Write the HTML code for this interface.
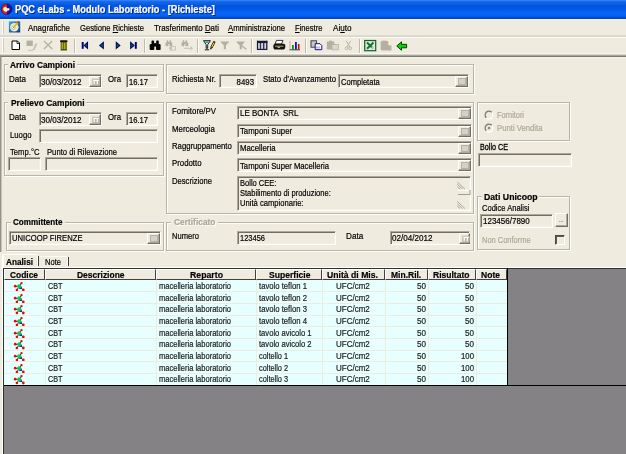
<!DOCTYPE html>
<html><head><meta charset="utf-8"><title>PQC eLabs - Modulo Laboratorio - [Richieste]</title>
<style>
html,body{margin:0;padding:0}
body{filter:blur(0.4px);width:626px;height:454px;overflow:hidden;position:relative;background:#efebde;font-family:"Liberation Sans",sans-serif;font-size:11px}
body div,body span.t,body svg{position:absolute}
span.t{white-space:pre;-webkit-text-stroke:0.2px currentColor}
u{text-decoration:underline;text-underline-offset:1px}
</style></head>
<body>
<div style="left:0px;top:0px;width:626px;height:19px;background:linear-gradient(#3a8cf8 0%,#1a6cec 7%,#0355dc 28%,#0458e4 48%,#0666f6 72%,#0560f0 84%,#0046d0 94%,#003ec0 100%)"></div>
<svg style="left:0px;top:3px" width="14" height="13" viewBox="0 0 14 13"><circle cx="6.700" cy="6.200" r="5.300" fill="#1010b8" stroke="#181828" stroke-width="0.700"/><path d="M6.900 0.900A5.300 5.300 0 0 0 6.900 11.500Z" fill="#f01808"/><path d="M3.200 6.300C3.200 4.300 5 3.300 6.600 4.200L6.600 5.200L8.800 5.200C9.800 5.200 9.900 7.400 8.800 7.400L7.300 7.400L7.300 8.600C5.500 9.300 3.200 8.300 3.200 6.300Z" fill="#fbf6c8"/></svg>
<div style="left:0px;top:19px;width:626px;height:18px;background:#efebde"></div>
<div style="left:2px;top:21px;width:1px;height:13px;background:#ffffff;box-shadow:1px 0 0 #cfccbf"></div>
<svg style="left:8px;top:21px" width="13" height="12" viewBox="0 0 13 12"><defs><linearGradient id="mi" x1="0" y1="0" x2="1" y2="1"><stop offset="0" stop-color="#38a8e8"/><stop offset="1" stop-color="#0c3c80"/></linearGradient></defs><rect x="0.900" y="0.400" width="11.300" height="11.100" fill="url(#mi)"/><circle cx="6.300" cy="6.300" r="4.300" fill="#f0ecc0"/><circle cx="5.300" cy="6.800" r="1.700" fill="#fff" stroke="#9090a0" stroke-width="0.500"/><path d="M10 1.300L5.800 6.300" stroke="#e8b818" stroke-width="1.700"/><path d="M10.600 0.600L9.700 1.700" stroke="#e02020" stroke-width="1.700"/><path d="M5.800 6.300L5 7.300" stroke="#606060" stroke-width="1"/></svg>
<div style="left:0px;top:35px;width:626px;height:1px;background:#dedbd0"></div>
<div style="left:0px;top:36px;width:626px;height:1px;background:#d9d6cb"></div>
<div style="left:0px;top:37px;width:626px;height:1px;background:#fbfaf5"></div>
<div style="left:0px;top:19px;width:626px;height:1px;background:#f6f4ea"></div>
<div style="left:2px;top:38px;width:1px;height:15px;background:#ffffff;box-shadow:1px 0 0 #cfccbf"></div>
<div style="left:74px;top:39px;width:1px;height:14px;background:#bdb9ad;box-shadow:1px 0 0 #ffffff"></div>
<div style="left:144px;top:39px;width:1px;height:14px;background:#bdb9ad;box-shadow:1px 0 0 #ffffff"></div>
<div style="left:197px;top:39px;width:1px;height:14px;background:#bdb9ad;box-shadow:1px 0 0 #ffffff"></div>
<div style="left:251px;top:39px;width:1px;height:14px;background:#bdb9ad;box-shadow:1px 0 0 #ffffff"></div>
<div style="left:305px;top:39px;width:1px;height:14px;background:#bdb9ad;box-shadow:1px 0 0 #ffffff"></div>
<div style="left:359px;top:39px;width:1px;height:14px;background:#bdb9ad;box-shadow:1px 0 0 #ffffff"></div>
<svg style="left:0;top:0" width="626" height="56" viewBox="0 0 626 56"><path d="M12 41H17.500L19.500 43V49.500H12Z" fill="#fff" stroke="#000" stroke-width="1"/><path d="M17 41V43.500H19.500" fill="none" stroke="#000" stroke-width="0.800"/><rect x="26.500" y="40.600" width="6.300" height="5.400" fill="#b4b0a2"/><path d="M35.500 43.500L37.600 43.500L34.500 50L32.500 50Z" fill="#c4c1b4"/><path d="M28 50.300H33" stroke="#c4c1b4" stroke-width="1"/><path d="M44 41L52.200 49M52.200 41L44 49" stroke="#b4b0a2" stroke-width="1.300" fill="none"/><rect x="60.600" y="42" width="6.300" height="8" rx="0.800" fill="#6b6b08"/><path d="M62.300 42.500V49.500M64.700 42.500V49.500" stroke="#c8c428" stroke-width="0.900"/><rect x="60" y="40.300" width="7.500" height="2" rx="0.800" fill="#181800"/><path d="M60.600 50H66.900" stroke="#202000" stroke-width="0.800"/><rect x="81.700" y="42" width="2" height="6.800" fill="#00007b"/><path d="M87.500 42.500L84.300 45.400L87.500 48.300Z" fill="#007b00" stroke="#00007b" stroke-width="1.100" stroke-linejoin="miter"/><path d="M103.300 42.500L99.800 45.400L103.300 48.300Z" fill="#007b00" stroke="#00007b" stroke-width="1.100" stroke-linejoin="miter"/><path d="M116.300 42.500L119.800 45.400L116.300 48.300Z" fill="#007b00" stroke="#00007b" stroke-width="1.100" stroke-linejoin="miter"/><path d="M130.700 42.500L134 45.400L130.700 48.300Z" fill="#007b00" stroke="#00007b" stroke-width="1.100" stroke-linejoin="miter"/><rect x="134.800" y="42" width="2" height="6.800" fill="#00007b"/><g transform="translate(149.7,40.6) scale(1)" fill="#080808"><rect x="0" y="3.500" width="4.600" height="6" rx="1.200"/><rect x="6.300" y="3.500" width="4.600" height="6" rx="1.200"/><rect x="1.800" y="0" width="2.600" height="4.500" rx="0.800"/><rect x="6.500" y="0" width="2.600" height="4.500" rx="0.800"/><rect x="4" y="2.500" width="3" height="3.500"/></g><g transform="translate(165.5,40.3) scale(0.62)" fill="#b4b0a2"><rect x="0" y="3.500" width="4.600" height="6" rx="1.200"/><rect x="6.300" y="3.500" width="4.600" height="6" rx="1.200"/><rect x="1.800" y="0" width="2.600" height="4.500" rx="0.800"/><rect x="6.500" y="0" width="2.600" height="4.500" rx="0.800"/><rect x="4" y="2.500" width="3" height="3.500"/></g><path d="M170.500 46.500H175.500V50H170.500ZM169 48.200L171.500 46V50.500Z" fill="none" stroke="#c4c1b4" stroke-width="0.900"/><g transform="translate(181.5,40.3) scale(0.62)" fill="#b4b0a2"><rect x="0" y="3.500" width="4.600" height="6" rx="1.200"/><rect x="6.300" y="3.500" width="4.600" height="6" rx="1.200"/><rect x="1.800" y="0" width="2.600" height="4.500" rx="0.800"/><rect x="6.500" y="0" width="2.600" height="4.500" rx="0.800"/><rect x="4" y="2.500" width="3" height="3.500"/></g><path d="M184 48.300H192.500M190.300 46.500L192.500 48.300L190.300 50.100" fill="none" stroke="#c4c1b4" stroke-width="1"/><path d="M203.500 40.700H210.400L207.700 44.600V48.300H206.200V44.600Z" fill="#f4f8f8" stroke="#000" stroke-width="0.900" stroke-linejoin="round"/><path d="M204.600 41.400H209.400L208.200 43H205.700Z" fill="#18a0a0"/><path d="M204.800 49.800H209.200" stroke="#000" stroke-width="0.900"/><path d="M214.300 42L211.300 47.800" stroke="#000" stroke-width="2.400"/><path d="M214 42.600L211.600 47.200" stroke="#e8d020" stroke-width="1.200"/><path d="M214.600 41.200L213.900 42.600" stroke="#a01010" stroke-width="2"/><path d="M211.200 47.800L210.600 49.300" stroke="#000" stroke-width="1.200"/><path d="M220.300 41.600H229.400L225.900 45.500V49.200H223.800V45.500Z" fill="#b4b0a2"/><path d="M236.500 41.600H245L241.800 45.500V49.200H239.700V45.500Z" fill="#b4b0a2"/><path d="M237 42L246.300 49.300" stroke="#b4b0a2" stroke-width="1.400"/><rect x="257" y="40.800" width="10.300" height="8.900" fill="#b8b8c4"/><rect x="257" y="40.800" width="10.300" height="2.200" fill="#18183c"/><path d="M257.500 40.800V49.700M266.800 40.800V49.700M257 49.300H267.300" stroke="#18183c" stroke-width="1.200" fill="none"/><path d="M260.400 43V49M263.700 43V49" stroke="#303050" stroke-width="1.300"/><path d="M259 43.500V48.800M262 43.500V48.800M265.300 43.500V48.800" stroke="#e8e8f0" stroke-width="0.800"/><path d="M276.500 40.400H283L281.500 44H275Z" fill="#fff" stroke="#000" stroke-width="0.800"/><path d="M273.300 46.500C273.300 44.300 274.500 43.800 276 43.800H283.500C285 43.800 285.300 44.800 285.300 46.500C285.300 48.600 284.500 49.600 283 49.600H275.500C274 49.600 273.300 48.600 273.300 46.500Z" fill="#101010"/><path d="M275 46.200H283.500" stroke="#e8e8e8" stroke-width="0.700"/><rect x="277.500" y="46.800" width="2.600" height="1" fill="#e8d020"/><path d="M290 41V49.500" stroke="#e0a0a8" stroke-width="1"/><rect x="292" y="45" width="1.800" height="4.500" fill="#00a000"/><rect x="295" y="42" width="1.800" height="7.500" fill="#1010c0"/><rect x="297.900" y="44" width="1.600" height="5.500" fill="#c01010"/><path d="M289.500 49.800H300" stroke="#303030" stroke-width="0.900"/><rect x="311" y="40.800" width="5.600" height="6.400" fill="#c8c8c8" stroke="#303030" stroke-width="0.900"/><path d="M315.200 43.700H320L321.800 45.500V49.700H315.200Z" fill="#fff" stroke="#101090" stroke-width="1"/><path d="M317 46.500V48.500M319 46.500V48.500" stroke="#5050a0" stroke-width="0.800"/><rect x="326.800" y="41.500" width="7.500" height="8" fill="#b4b0a2"/><rect x="332" y="44.500" width="6.300" height="5.300" fill="#dcd9cc" stroke="#b4b0a2" stroke-width="0.800"/><path d="M329 40.600H332V42H329Z" fill="#b4b0a2"/><path d="M346.200 40.800L349.800 47M350.600 40.800L347 47" stroke="#b4b0a2" stroke-width="1" fill="none"/><circle cx="346.600" cy="48.300" r="1.400" fill="none" stroke="#b4b0a2" stroke-width="0.900"/><circle cx="350.200" cy="48.300" r="1.400" fill="none" stroke="#b4b0a2" stroke-width="0.900"/><rect x="364.700" y="40.500" width="11" height="10.200" fill="#d8ecd8" stroke="#186028" stroke-width="1.200"/><path d="M367 42.500L373.500 48.800M373.500 42.500L367 48.800" stroke="#187030" stroke-width="1.900"/><path d="M371.500 46.500H375V50H371.500Z" fill="#e8f0e8" opacity="0.700"/><ellipse cx="384.500" cy="42" rx="3.800" ry="1.600" fill="#b4b0a2"/><rect x="380.700" y="42" width="7.600" height="7" fill="#b4b0a2"/><ellipse cx="384.500" cy="49" rx="3.800" ry="1.600" fill="#b4b0a2"/><path d="M387.500 45.500H391.400V50.500H387.500Z" fill="#a8a498"/><path d="M388 47H391M388 49H391" stroke="#d8d4c8" stroke-width="0.600"/><path d="M396.800 46L401.500 41.800V44.300H406.600V47.800H401.500V50.300Z" fill="#00d800" stroke="#002800" stroke-width="0.900" stroke-linejoin="round"/></svg>
<div style="left:0px;top:53px;width:626px;height:1px;background:#f8f6ef"></div>
<div style="left:0px;top:54px;width:626px;height:1px;background:#d6d3c7"></div>
<div style="left:0px;top:55px;width:626px;height:1px;background:#a8a59a"></div>
<div style="left:0px;top:56px;width:626px;height:1px;background:#7d7a70"></div>
<div style="left:1px;top:57px;width:625px;height:1px;background:#f6f4ec"></div>
<div style="left:0px;top:55px;width:1px;height:197px;background:#96938a"></div>
<div style="left:1px;top:57px;width:1px;height:195px;background:#c4c1b5"></div>
<div style="left:4px;top:64px;width:160px;height:28px;box-sizing:border-box;border:1px solid #b9b6a8;box-shadow:1px 1px 0 #ffffff,inset 1px 1px 0 #ffffff"></div>
<div style="left:8px;top:58px;width:69px;height:12px;background:#efebde"></div>
<div style="left:39px;top:74px;width:63px;height:14px;background:#efebde;box-sizing:border-box;border:1px solid;border-color:#adaa9c #ffffff #ffffff #adaa9c;box-shadow:inset 1px 1px 0 #736d63,inset -1px -1px 0 #f7efe7"></div>
<div style="left:89px;top:76px;width:12px;height:11px;background:#efebde;box-sizing:border-box;border:1px solid;border-color:#ffffff #736d63 #736d63 #ffffff;box-shadow:inset -1px -1px 0 #adaa9c"><svg style="left:2px;top:1px" width="8" height="8" viewBox="0 0 8 8"><rect x="0.300" y="0.800" width="7.400" height="6.400" fill="#b9b6a9"/><path d="M2.200 2.600V6.200M5.300 2.600V6.200M1.200 2.400H6.800" stroke="#ffffff" stroke-width="1.200" fill="none"/></svg></div>
<div style="left:126px;top:74px;width:32px;height:14px;background:#efebde;box-sizing:border-box;border:1px solid;border-color:#adaa9c #ffffff #ffffff #adaa9c;box-shadow:inset 1px 1px 0 #736d63,inset -1px -1px 0 #f7efe7"></div>
<div style="left:166px;top:64px;width:308px;height:30px;box-sizing:border-box;border:1px solid #b9b6a8;box-shadow:1px 1px 0 #ffffff,inset 1px 1px 0 #ffffff"></div>
<div style="left:219px;top:74px;width:38px;height:14px;background:#efebde;box-sizing:border-box;border:1px solid;border-color:#adaa9c #ffffff #ffffff #adaa9c;box-shadow:inset 1px 1px 0 #736d63,inset -1px -1px 0 #f7efe7"></div>
<div style="left:338px;top:74px;width:131px;height:14px;background:#efebde;box-sizing:border-box;border:1px solid;border-color:#adaa9c #ffffff #ffffff #adaa9c;box-shadow:inset 1px 1px 0 #736d63,inset -1px -1px 0 #f7efe7"></div>
<div style="left:455px;top:76px;width:13px;height:11px;background:#efebde;box-sizing:border-box;border:1px solid;border-color:#ffffff #736d63 #736d63 #ffffff;box-shadow:inset -1px -1px 0 #adaa9c"><div style="left:2px;top:1px;width:8px;height:7px;background:#d4d1c8;border:1px solid #b5b2a5;box-sizing:border-box"></div></div>
<div style="left:4px;top:102px;width:160px;height:74px;box-sizing:border-box;border:1px solid #b9b6a8;box-shadow:1px 1px 0 #ffffff,inset 1px 1px 0 #ffffff"></div>
<div style="left:8px;top:96px;width:78px;height:12px;background:#efebde"></div>
<div style="left:39px;top:112px;width:63px;height:14px;background:#efebde;box-sizing:border-box;border:1px solid;border-color:#adaa9c #ffffff #ffffff #adaa9c;box-shadow:inset 1px 1px 0 #736d63,inset -1px -1px 0 #f7efe7"></div>
<div style="left:89px;top:114px;width:12px;height:11px;background:#efebde;box-sizing:border-box;border:1px solid;border-color:#ffffff #736d63 #736d63 #ffffff;box-shadow:inset -1px -1px 0 #adaa9c"><svg style="left:2px;top:1px" width="8" height="8" viewBox="0 0 8 8"><rect x="0.300" y="0.800" width="7.400" height="6.400" fill="#b9b6a9"/><path d="M2.200 2.600V6.200M5.300 2.600V6.200M1.200 2.400H6.800" stroke="#ffffff" stroke-width="1.200" fill="none"/></svg></div>
<div style="left:126px;top:112px;width:32px;height:14px;background:#efebde;box-sizing:border-box;border:1px solid;border-color:#adaa9c #ffffff #ffffff #adaa9c;box-shadow:inset 1px 1px 0 #736d63,inset -1px -1px 0 #f7efe7"></div>
<div style="left:39px;top:129px;width:119px;height:14px;background:#efebde;box-sizing:border-box;border:1px solid;border-color:#adaa9c #ffffff #ffffff #adaa9c;box-shadow:inset 1px 1px 0 #736d63,inset -1px -1px 0 #f7efe7"></div>
<div style="left:8px;top:157px;width:33px;height:14px;background:#efebde;box-sizing:border-box;border:1px solid;border-color:#adaa9c #ffffff #ffffff #adaa9c;box-shadow:inset 1px 1px 0 #736d63,inset -1px -1px 0 #f7efe7"></div>
<div style="left:45px;top:157px;width:113px;height:14px;background:#efebde;box-sizing:border-box;border:1px solid;border-color:#adaa9c #ffffff #ffffff #adaa9c;box-shadow:inset 1px 1px 0 #736d63,inset -1px -1px 0 #f7efe7"></div>
<div style="left:166px;top:102px;width:308px;height:112px;box-sizing:border-box;border:1px solid #b9b6a8;box-shadow:1px 1px 0 #ffffff,inset 1px 1px 0 #ffffff"></div>
<div style="left:237px;top:106px;width:235px;height:14px;background:#efebde;box-sizing:border-box;border:1px solid;border-color:#adaa9c #ffffff #ffffff #adaa9c;box-shadow:inset 1px 1px 0 #736d63,inset -1px -1px 0 #f7efe7"></div>
<div style="left:458px;top:108px;width:13px;height:11px;background:#efebde;box-sizing:border-box;border:1px solid;border-color:#ffffff #736d63 #736d63 #ffffff;box-shadow:inset -1px -1px 0 #adaa9c"><div style="left:2px;top:1px;width:8px;height:7px;background:#d4d1c8;border:1px solid #b5b2a5;box-sizing:border-box"></div></div>
<div style="left:237px;top:124px;width:235px;height:14px;background:#efebde;box-sizing:border-box;border:1px solid;border-color:#adaa9c #ffffff #ffffff #adaa9c;box-shadow:inset 1px 1px 0 #736d63,inset -1px -1px 0 #f7efe7"></div>
<div style="left:458px;top:126px;width:13px;height:11px;background:#efebde;box-sizing:border-box;border:1px solid;border-color:#ffffff #736d63 #736d63 #ffffff;box-shadow:inset -1px -1px 0 #adaa9c"><div style="left:2px;top:1px;width:8px;height:7px;background:#d4d1c8;border:1px solid #b5b2a5;box-sizing:border-box"></div></div>
<div style="left:237px;top:141px;width:235px;height:14px;background:#efebde;box-sizing:border-box;border:1px solid;border-color:#adaa9c #ffffff #ffffff #adaa9c;box-shadow:inset 1px 1px 0 #736d63,inset -1px -1px 0 #f7efe7"></div>
<div style="left:458px;top:143px;width:13px;height:11px;background:#efebde;box-sizing:border-box;border:1px solid;border-color:#ffffff #736d63 #736d63 #ffffff;box-shadow:inset -1px -1px 0 #adaa9c"><div style="left:2px;top:1px;width:8px;height:7px;background:#d4d1c8;border:1px solid #b5b2a5;box-sizing:border-box"></div></div>
<div style="left:237px;top:158px;width:235px;height:14px;background:#efebde;box-sizing:border-box;border:1px solid;border-color:#adaa9c #ffffff #ffffff #adaa9c;box-shadow:inset 1px 1px 0 #736d63,inset -1px -1px 0 #f7efe7"></div>
<div style="left:458px;top:160px;width:13px;height:11px;background:#efebde;box-sizing:border-box;border:1px solid;border-color:#ffffff #736d63 #736d63 #ffffff;box-shadow:inset -1px -1px 0 #adaa9c"><div style="left:2px;top:1px;width:8px;height:7px;background:#d4d1c8;border:1px solid #b5b2a5;box-sizing:border-box"></div></div>
<div style="left:237px;top:176px;width:234px;height:35px;background:#efebde;box-sizing:border-box;border:1px solid;border-color:#adaa9c #ffffff #ffffff #adaa9c;box-shadow:inset 1px 1px 0 #736d63,inset -1px -1px 0 #f7efe7"></div>
<svg style="left:456px;top:178px" width="15" height="33" viewBox="456 178 15 33"><g stroke="#a5a296" stroke-width="0.900" fill="none"><path d="M457.300 182L465 189.200M457.300 184.400L462.600 189.200M457.300 186.800L460.200 189.200"/><path d="M457.300 201.400L465 208.600M457.300 203.800L462.600 208.600M457.300 206.200L460.200 208.600"/></g><rect x="458" y="190" width="11.500" height="4.300" fill="#efebde"/><path d="M458 190.300H469" stroke="#fff" stroke-width="1"/><path d="M458 194.500H470V190" stroke="#a09d92" stroke-width="1.100" fill="none"/></svg>
<div style="left:477px;top:102px;width:93px;height:39px;box-sizing:border-box;border:1px solid #b9b6a8;box-shadow:1px 1px 0 #ffffff,inset 1px 1px 0 #ffffff"></div>
<svg style="left:482.5px;top:108.8px" width="12" height="12" viewBox="0 0 12 12"><circle cx="6" cy="6" r="3.800" fill="#efebde" stroke="#ffffff" stroke-width="1.300"/><path d="M3.300 8.700A3.800 3.800 0 0 1 8.700 3.300" stroke="#77746a" stroke-width="1.400" fill="none"/></svg>
<svg style="left:482.5px;top:121.7px" width="12" height="12" viewBox="0 0 12 12"><circle cx="6" cy="6" r="3.800" fill="#efebde" stroke="#ffffff" stroke-width="1.300"/><path d="M3.300 8.700A3.800 3.800 0 0 1 8.700 3.300" stroke="#77746a" stroke-width="1.400" fill="none"/><circle cx="6" cy="6" r="1.300" fill="#8a877c"/></svg>
<div style="left:478px;top:153px;width:94px;height:14px;background:#efebde;box-sizing:border-box;border:1px solid;border-color:#adaa9c #ffffff #ffffff #adaa9c;box-shadow:inset 1px 1px 0 #736d63,inset -1px -1px 0 #f7efe7"></div>
<div style="left:477px;top:196px;width:93px;height:54px;box-sizing:border-box;border:1px solid #b9b6a8;box-shadow:1px 1px 0 #ffffff,inset 1px 1px 0 #ffffff"></div>
<div style="left:482px;top:191px;width:57px;height:12px;background:#efebde"></div>
<div style="left:480px;top:214px;width:73px;height:14px;background:#efebde;box-sizing:border-box;border:1px solid;border-color:#adaa9c #ffffff #ffffff #adaa9c;box-shadow:inset 1px 1px 0 #736d63,inset -1px -1px 0 #f7efe7"></div>
<div style="left:555px;top:213px;width:13px;height:14px;background:#efebde;box-sizing:border-box;border:1px solid;border-color:#ffffff #736d63 #736d63 #ffffff;box-shadow:inset -1px -1px 0 #adaa9c"></div>
<div style="left:555px;top:235px;width:10px;height:10px;box-sizing:border-box;border:1px solid;border-color:#4a4842 #ffffff #ffffff #4a4842;box-shadow:inset 1px 1px 0 #5e5c54;background:#efebde"></div>
<div style="left:6px;top:222px;width:158px;height:29px;box-sizing:border-box;border:1px solid #b9b6a8;box-shadow:1px 1px 0 #ffffff,inset 1px 1px 0 #ffffff"></div>
<div style="left:11px;top:216px;width:54px;height:12px;background:#efebde"></div>
<div style="left:9px;top:231px;width:152px;height:14px;background:#efebde;box-sizing:border-box;border:1px solid;border-color:#adaa9c #ffffff #ffffff #adaa9c;box-shadow:inset 1px 1px 0 #736d63,inset -1px -1px 0 #f7efe7"></div>
<div style="left:147px;top:233px;width:13px;height:11px;background:#efebde;box-sizing:border-box;border:1px solid;border-color:#ffffff #736d63 #736d63 #ffffff;box-shadow:inset -1px -1px 0 #adaa9c"><div style="left:2px;top:1px;width:8px;height:7px;background:#d4d1c8;border:1px solid #b5b2a5;box-sizing:border-box"></div></div>
<div style="left:166px;top:222px;width:308px;height:29px;box-sizing:border-box;border:1px solid #b9b6a8;box-shadow:1px 1px 0 #ffffff,inset 1px 1px 0 #ffffff"></div>
<div style="left:171px;top:216px;width:47px;height:12px;background:#efebde"></div>
<div style="left:237px;top:231px;width:99px;height:14px;background:#efebde;box-sizing:border-box;border:1px solid;border-color:#adaa9c #ffffff #ffffff #adaa9c;box-shadow:inset 1px 1px 0 #736d63,inset -1px -1px 0 #f7efe7"></div>
<div style="left:390px;top:231px;width:80px;height:14px;background:#efebde;box-sizing:border-box;border:1px solid;border-color:#adaa9c #ffffff #ffffff #adaa9c;box-shadow:inset 1px 1px 0 #736d63,inset -1px -1px 0 #f7efe7"></div>
<div style="left:459px;top:233px;width:11px;height:11px;background:#efebde;box-sizing:border-box;border:1px solid;border-color:#ffffff #736d63 #736d63 #ffffff;box-shadow:inset -1px -1px 0 #adaa9c"><svg style="left:2px;top:1px" width="8" height="8" viewBox="0 0 8 8"><rect x="0.300" y="0.800" width="7.400" height="6.400" fill="#b9b6a9"/><path d="M2.200 2.600V6.200M5.300 2.600V6.200M1.200 2.400H6.800" stroke="#ffffff" stroke-width="1.200" fill="none"/></svg></div>
<div style="left:37.5px;top:256px;width:1.2px;height:9.5px;background:#3c3c3c"></div>
<div style="left:67.8px;top:257px;width:1.2px;height:8.5px;background:#3c3c3c"></div>
<div style="left:3px;top:254px;width:34px;height:1px;background:#ffffff"></div>
<div style="left:40px;top:256px;width:27px;height:1px;background:#fbfaf6"></div>
<div style="left:36.5px;top:256px;width:1px;height:9.5px;background:#ffffff"></div>
<div style="left:66.8px;top:257px;width:1px;height:8.5px;background:#ffffff"></div>
<div style="left:2px;top:268px;width:624px;height:186px;background:#848284"></div>
<div style="left:2px;top:254px;width:2px;height:200px;background:#ffffff"></div>
<div style="left:3px;top:268px;width:1px;height:186px;background:#303030"></div>
<div style="left:2px;top:267px;width:624px;height:1px;background:#ffffff"></div>
<div style="left:3px;top:268px;width:623px;height:1px;background:#303030"></div>
<div style="left:4px;top:269px;width:503px;height:116px;background:#e7ffff"></div>
<div style="left:4px;top:385px;width:622px;height:1px;background:#000"></div>
<div style="left:4px;top:269px;width:503px;height:11px;background:#efebde"></div>
<div style="left:4px;top:269px;width:40.5px;height:11px;box-sizing:border-box;border:1px solid;border-color:#ffffff #404040 #404040 #ffffff;background:#efebde"></div>
<div style="left:44.5px;top:269px;width:111.5px;height:11px;box-sizing:border-box;border:1px solid;border-color:#ffffff #404040 #404040 #ffffff;background:#efebde"></div>
<div style="left:156px;top:269px;width:100px;height:11px;box-sizing:border-box;border:1px solid;border-color:#ffffff #404040 #404040 #ffffff;background:#efebde"></div>
<div style="left:256px;top:269px;width:65.5px;height:11px;box-sizing:border-box;border:1px solid;border-color:#ffffff #404040 #404040 #ffffff;background:#efebde"></div>
<div style="left:321.5px;top:269px;width:63.0px;height:11px;box-sizing:border-box;border:1px solid;border-color:#ffffff #404040 #404040 #ffffff;background:#efebde"></div>
<div style="left:384.5px;top:269px;width:43.25px;height:11px;box-sizing:border-box;border:1px solid;border-color:#ffffff #404040 #404040 #ffffff;background:#efebde"></div>
<div style="left:427.75px;top:269px;width:48.0px;height:11px;box-sizing:border-box;border:1px solid;border-color:#ffffff #404040 #404040 #ffffff;background:#efebde"></div>
<div style="left:475.75px;top:269px;width:31.25px;height:11px;box-sizing:border-box;border:1px solid;border-color:#ffffff #404040 #404040 #ffffff;background:#efebde"></div>
<div style="left:507px;top:268px;width:1px;height:118px;background:#000"></div>
<div style="left:44.5px;top:280px;width:1px;height:105px;background:#efebde"></div>
<div style="left:156px;top:280px;width:1px;height:105px;background:#efebde"></div>
<div style="left:256px;top:280px;width:1px;height:105px;background:#efebde"></div>
<div style="left:321.5px;top:280px;width:1px;height:105px;background:#efebde"></div>
<div style="left:384.5px;top:280px;width:1px;height:105px;background:#efebde"></div>
<div style="left:427.75px;top:280px;width:1px;height:105px;background:#efebde"></div>
<div style="left:475.75px;top:280px;width:1px;height:105px;background:#efebde"></div>
<svg style="left:13px;top:281.00px" width="14" height="11" viewBox="13 281 14 11"><path d="M19.300 286.500L21.400 283.200M19.300 286.500L15.200 286.300M19.300 286.500L16.900 290M19.300 286.500L23.200 290" stroke="#181818" stroke-width="0.900" fill="none"/><circle cx="20.300" cy="287.600" r="1.500" fill="#1828c8"/><circle cx="19.200" cy="286.300" r="2.100" fill="#10c848"/><circle cx="21.500" cy="283.100" r="1.200" fill="#e80808"/><circle cx="15.200" cy="286.200" r="1.400" fill="#e80808"/><circle cx="16.900" cy="290" r="1.300" fill="#e80808"/><circle cx="23.300" cy="290" r="1.400" fill="#e80808"/></svg>
<div style="left:4px;top:291.0px;width:503px;height:1px;background:#efebde"></div>
<svg style="left:13px;top:292.67px" width="14" height="11" viewBox="13 281 14 11"><path d="M19.300 286.500L21.400 283.200M19.300 286.500L15.200 286.300M19.300 286.500L16.900 290M19.300 286.500L23.200 290" stroke="#181818" stroke-width="0.900" fill="none"/><circle cx="20.300" cy="287.600" r="1.500" fill="#1828c8"/><circle cx="19.200" cy="286.300" r="2.100" fill="#10c848"/><circle cx="21.500" cy="283.100" r="1.200" fill="#e80808"/><circle cx="15.200" cy="286.200" r="1.400" fill="#e80808"/><circle cx="16.900" cy="290" r="1.300" fill="#e80808"/><circle cx="23.300" cy="290" r="1.400" fill="#e80808"/></svg>
<div style="left:4px;top:303.0px;width:503px;height:1px;background:#efebde"></div>
<svg style="left:13px;top:304.34px" width="14" height="11" viewBox="13 281 14 11"><path d="M19.300 286.500L21.400 283.200M19.300 286.500L15.200 286.300M19.300 286.500L16.900 290M19.300 286.500L23.200 290" stroke="#181818" stroke-width="0.900" fill="none"/><circle cx="20.300" cy="287.600" r="1.500" fill="#1828c8"/><circle cx="19.200" cy="286.300" r="2.100" fill="#10c848"/><circle cx="21.500" cy="283.100" r="1.200" fill="#e80808"/><circle cx="15.200" cy="286.200" r="1.400" fill="#e80808"/><circle cx="16.900" cy="290" r="1.300" fill="#e80808"/><circle cx="23.300" cy="290" r="1.400" fill="#e80808"/></svg>
<div style="left:4px;top:314.5px;width:503px;height:1px;background:#efebde"></div>
<svg style="left:13px;top:316.01px" width="14" height="11" viewBox="13 281 14 11"><path d="M19.300 286.500L21.400 283.200M19.300 286.500L15.200 286.300M19.300 286.500L16.900 290M19.300 286.500L23.200 290" stroke="#181818" stroke-width="0.900" fill="none"/><circle cx="20.300" cy="287.600" r="1.500" fill="#1828c8"/><circle cx="19.200" cy="286.300" r="2.100" fill="#10c848"/><circle cx="21.500" cy="283.100" r="1.200" fill="#e80808"/><circle cx="15.200" cy="286.200" r="1.400" fill="#e80808"/><circle cx="16.900" cy="290" r="1.300" fill="#e80808"/><circle cx="23.300" cy="290" r="1.400" fill="#e80808"/></svg>
<div style="left:4px;top:326.0px;width:503px;height:1px;background:#efebde"></div>
<svg style="left:13px;top:327.68px" width="14" height="11" viewBox="13 281 14 11"><path d="M19.300 286.500L21.400 283.200M19.300 286.500L15.200 286.300M19.300 286.500L16.900 290M19.300 286.500L23.200 290" stroke="#181818" stroke-width="0.900" fill="none"/><circle cx="20.300" cy="287.600" r="1.500" fill="#1828c8"/><circle cx="19.200" cy="286.300" r="2.100" fill="#10c848"/><circle cx="21.500" cy="283.100" r="1.200" fill="#e80808"/><circle cx="15.200" cy="286.200" r="1.400" fill="#e80808"/><circle cx="16.900" cy="290" r="1.300" fill="#e80808"/><circle cx="23.300" cy="290" r="1.400" fill="#e80808"/></svg>
<div style="left:4px;top:338.0px;width:503px;height:1px;background:#efebde"></div>
<svg style="left:13px;top:339.35px" width="14" height="11" viewBox="13 281 14 11"><path d="M19.300 286.500L21.400 283.200M19.300 286.500L15.200 286.300M19.300 286.500L16.900 290M19.300 286.500L23.200 290" stroke="#181818" stroke-width="0.900" fill="none"/><circle cx="20.300" cy="287.600" r="1.500" fill="#1828c8"/><circle cx="19.200" cy="286.300" r="2.100" fill="#10c848"/><circle cx="21.500" cy="283.100" r="1.200" fill="#e80808"/><circle cx="15.200" cy="286.200" r="1.400" fill="#e80808"/><circle cx="16.900" cy="290" r="1.300" fill="#e80808"/><circle cx="23.300" cy="290" r="1.400" fill="#e80808"/></svg>
<div style="left:4px;top:349.5px;width:503px;height:1px;background:#efebde"></div>
<svg style="left:13px;top:351.02px" width="14" height="11" viewBox="13 281 14 11"><path d="M19.300 286.500L21.400 283.200M19.300 286.500L15.200 286.300M19.300 286.500L16.900 290M19.300 286.500L23.200 290" stroke="#181818" stroke-width="0.900" fill="none"/><circle cx="20.300" cy="287.600" r="1.500" fill="#1828c8"/><circle cx="19.200" cy="286.300" r="2.100" fill="#10c848"/><circle cx="21.500" cy="283.100" r="1.200" fill="#e80808"/><circle cx="15.200" cy="286.200" r="1.400" fill="#e80808"/><circle cx="16.900" cy="290" r="1.300" fill="#e80808"/><circle cx="23.300" cy="290" r="1.400" fill="#e80808"/></svg>
<div style="left:4px;top:361.0px;width:503px;height:1px;background:#efebde"></div>
<svg style="left:13px;top:362.69px" width="14" height="11" viewBox="13 281 14 11"><path d="M19.300 286.500L21.400 283.200M19.300 286.500L15.200 286.300M19.300 286.500L16.900 290M19.300 286.500L23.200 290" stroke="#181818" stroke-width="0.900" fill="none"/><circle cx="20.300" cy="287.600" r="1.500" fill="#1828c8"/><circle cx="19.200" cy="286.300" r="2.100" fill="#10c848"/><circle cx="21.500" cy="283.100" r="1.200" fill="#e80808"/><circle cx="15.200" cy="286.200" r="1.400" fill="#e80808"/><circle cx="16.900" cy="290" r="1.300" fill="#e80808"/><circle cx="23.300" cy="290" r="1.400" fill="#e80808"/></svg>
<div style="left:4px;top:373.0px;width:503px;height:1px;background:#efebde"></div>
<svg style="left:13px;top:374.36px" width="14" height="11" viewBox="13 281 14 11"><path d="M19.300 286.500L21.400 283.200M19.300 286.500L15.200 286.300M19.300 286.500L16.900 290M19.300 286.500L23.200 290" stroke="#181818" stroke-width="0.900" fill="none"/><circle cx="20.300" cy="287.600" r="1.500" fill="#1828c8"/><circle cx="19.200" cy="286.300" r="2.100" fill="#10c848"/><circle cx="21.500" cy="283.100" r="1.200" fill="#e80808"/><circle cx="15.200" cy="286.200" r="1.400" fill="#e80808"/><circle cx="16.900" cy="290" r="1.300" fill="#e80808"/><circle cx="23.300" cy="290" r="1.400" fill="#e80808"/></svg>
<span class="t" style="top:4px;font-size:10px;line-height:12px;color:#fff;font-weight:bold;left:15.00px;transform:scaleX(0.925);transform-origin:0 0;text-shadow:1px 1px 0 #0a1e8c;">PQC eLabs - Modulo Laboratorio - [Richieste]</span>
<span class="t" style="top:23px;font-size:9px;line-height:11px;color:#000;left:27.50px;transform:scaleX(0.874);transform-origin:0 0;">Ana<u>g</u>rafiche</span>
<span class="t" style="top:23px;font-size:9px;line-height:11px;color:#000;left:80.00px;transform:scaleX(0.847);transform-origin:0 0;">Gestione <u>R</u>ichieste</span>
<span class="t" style="top:23px;font-size:9px;line-height:11px;color:#000;left:154.00px;transform:scaleX(0.882);transform-origin:0 0;">Trasferimento <u>D</u>ati</span>
<span class="t" style="top:23px;font-size:9px;line-height:11px;color:#000;left:228.00px;transform:scaleX(0.857);transform-origin:0 0;"><u>A</u>mministrazione</span>
<span class="t" style="top:23px;font-size:9px;line-height:11px;color:#000;left:295.00px;transform:scaleX(0.846);transform-origin:0 0;"><u>F</u>inestre</span>
<span class="t" style="top:23px;font-size:9px;line-height:11px;color:#000;left:333.00px;transform:scaleX(0.902);transform-origin:0 0;">Ai<u>u</u>to</span>
<span class="t" style="top:59px;font-size:9.5px;line-height:12px;color:#000;font-weight:bold;left:10.00px;transform:scaleX(0.879);transform-origin:0 0;">Arrivo Campioni</span>
<span class="t" style="top:74px;font-size:9px;line-height:11px;color:#000;left:9.00px;transform:scaleX(0.894);transform-origin:0 0;">Data</span>
<span class="t" style="top:77px;font-size:9px;line-height:11px;color:#000;left:40.50px;transform:scaleX(0.899);transform-origin:0 0;">30/03/2012</span>
<span class="t" style="top:74px;font-size:9px;line-height:11px;color:#000;left:108.00px;transform:scaleX(0.866);transform-origin:0 0;">Ora</span>
<span class="t" style="top:77px;font-size:9px;line-height:11px;color:#000;left:128.80px;transform:scaleX(0.843);transform-origin:0 0;">16.17</span>
<span class="t" style="top:74px;font-size:9px;line-height:11px;color:#000;left:171.50px;transform:scaleX(0.862);transform-origin:0 0;">Richiesta Nr.</span>
<span class="t" style="top:77px;font-size:9px;line-height:11px;color:#000;right:372.30px;transform:scaleX(0.874);transform-origin:100% 0;">8493</span>
<span class="t" style="top:74px;font-size:9px;line-height:11px;color:#000;left:263.00px;transform:scaleX(0.858);transform-origin:0 0;">Stato d&#x27;Avanzamento</span>
<span class="t" style="top:77px;font-size:9px;line-height:11px;color:#000;left:340.75px;transform:scaleX(0.842);transform-origin:0 0;">Completata</span>
<span class="t" style="top:97px;font-size:9.5px;line-height:12px;color:#000;font-weight:bold;left:10.50px;transform:scaleX(0.887);transform-origin:0 0;">Prelievo Campioni</span>
<span class="t" style="top:112px;font-size:9px;line-height:11px;color:#000;left:9.00px;transform:scaleX(0.894);transform-origin:0 0;">Data</span>
<span class="t" style="top:115px;font-size:9px;line-height:11px;color:#000;left:40.50px;transform:scaleX(0.899);transform-origin:0 0;">30/03/2012</span>
<span class="t" style="top:112px;font-size:9px;line-height:11px;color:#000;left:108.00px;transform:scaleX(0.866);transform-origin:0 0;">Ora</span>
<span class="t" style="top:115px;font-size:9px;line-height:11px;color:#000;left:128.80px;transform:scaleX(0.843);transform-origin:0 0;">16.17</span>
<span class="t" style="top:130px;font-size:9px;line-height:11px;color:#000;left:10.00px;transform:scaleX(0.859);transform-origin:0 0;">Luogo</span>
<span class="t" style="top:147px;font-size:9px;line-height:11px;color:#000;left:9.50px;transform:scaleX(0.852);transform-origin:0 0;">Temp.°C</span>
<span class="t" style="top:147px;font-size:9px;line-height:11px;color:#000;left:47.00px;transform:scaleX(0.853);transform-origin:0 0;">Punto di Rilevazione</span>
<span class="t" style="top:106px;font-size:9px;line-height:11px;color:#000;left:172.00px;transform:scaleX(0.871);transform-origin:0 0;">Fornitore/PV</span>
<span class="t" style="top:124px;font-size:9px;line-height:11px;color:#000;left:172.00px;transform:scaleX(0.872);transform-origin:0 0;">Merceologia</span>
<span class="t" style="top:141px;font-size:9px;line-height:11px;color:#000;left:172.00px;transform:scaleX(0.859);transform-origin:0 0;">Raggruppamento</span>
<span class="t" style="top:158px;font-size:9px;line-height:11px;color:#000;left:172.00px;transform:scaleX(0.867);transform-origin:0 0;">Prodotto</span>
<span class="t" style="top:176px;font-size:9px;line-height:11px;color:#000;left:172.00px;transform:scaleX(0.850);transform-origin:0 0;">Descrizione</span>
<span class="t" style="top:108px;font-size:9px;line-height:11px;color:#000;left:240.00px;transform:scaleX(0.888);transform-origin:0 0;">LE BONTA  SRL</span>
<span class="t" style="top:126px;font-size:9px;line-height:11px;color:#000;left:240.00px;transform:scaleX(0.859);transform-origin:0 0;">Tamponi Super</span>
<span class="t" style="top:143px;font-size:9px;line-height:11px;color:#000;left:240.00px;transform:scaleX(0.866);transform-origin:0 0;">Macelleria</span>
<span class="t" style="top:161px;font-size:9px;line-height:11px;color:#000;left:240.00px;transform:scaleX(0.855);transform-origin:0 0;">Tamponi Super Macelleria</span>
<span class="t" style="top:178px;font-size:9px;line-height:11px;color:#000;left:240.00px;transform:scaleX(0.838);transform-origin:0 0;">Bollo CEE:</span>
<span class="t" style="top:188px;font-size:9px;line-height:11px;color:#000;left:240.00px;transform:scaleX(0.836);transform-origin:0 0;">Stabilimento di produzione:</span>
<span class="t" style="top:198px;font-size:9px;line-height:11px;color:#000;left:240.00px;transform:scaleX(0.846);transform-origin:0 0;">Unità campionarie:</span>
<span class="t" style="top:110px;font-size:9px;line-height:11px;color:#aca899;left:497.00px;transform:scaleX(0.818);transform-origin:0 0;">Fornitori</span>
<span class="t" style="top:123px;font-size:9px;line-height:11px;color:#aca899;left:497.00px;transform:scaleX(0.858);transform-origin:0 0;">Punti Vendita</span>
<span class="t" style="top:142px;font-size:9px;line-height:11px;color:#000;left:480.00px;transform:scaleX(0.800);transform-origin:0 0;-webkit-text-stroke:0.300px #000;">Bollo CE</span>
<span class="t" style="top:191px;font-size:9.5px;line-height:12px;color:#000;font-weight:bold;left:483.70px;transform:scaleX(0.916);transform-origin:0 0;">Dati Unicoop</span>
<span class="t" style="top:203px;font-size:9px;line-height:11px;color:#000;left:482.00px;transform:scaleX(0.838);transform-origin:0 0;">Codice Analisi</span>
<span class="t" style="top:216px;font-size:9px;line-height:11px;color:#000;left:482.60px;transform:scaleX(0.890);transform-origin:0 0;">123456/7890</span>
<span class="t" style="top:215px;font-size:7px;line-height:9px;color:#808080;left:559.00px;transform:scaleX(0.770);transform-origin:0 0;">...</span>
<span class="t" style="top:235px;font-size:9px;line-height:11px;color:#aca899;left:482.00px;transform:scaleX(0.830);transform-origin:0 0;">Non Conforme</span>
<span class="t" style="top:216px;font-size:9.5px;line-height:12px;color:#000;font-weight:bold;left:13.00px;transform:scaleX(0.853);transform-origin:0 0;">Committente</span>
<span class="t" style="top:233px;font-size:9px;line-height:11px;color:#000;left:11.50px;transform:scaleX(0.851);transform-origin:0 0;">UNICOOP FIRENZE</span>
<span class="t" style="top:216px;font-size:9.5px;line-height:12px;color:#aca899;font-weight:bold;left:173.50px;transform:scaleX(0.883);transform-origin:0 0;text-shadow:1px 1px 0 #fff;">Certificato</span>
<span class="t" style="top:231px;font-size:9px;line-height:11px;color:#000;left:171.50px;transform:scaleX(0.843);transform-origin:0 0;">Numero</span>
<span class="t" style="top:233px;font-size:9px;line-height:11px;color:#000;left:240.00px;transform:scaleX(0.832);transform-origin:0 0;">123456</span>
<span class="t" style="top:231px;font-size:9px;line-height:11px;color:#000;left:345.75px;transform:scaleX(0.907);transform-origin:0 0;">Data</span>
<span class="t" style="top:233px;font-size:9px;line-height:11px;color:#000;left:392.00px;transform:scaleX(0.899);transform-origin:0 0;">02/04/2012</span>
<span class="t" style="top:256px;font-size:9.5px;line-height:12px;color:#000;font-weight:bold;left:6.00px;transform:scaleX(0.867);transform-origin:0 0;">Analisi</span>
<span class="t" style="top:257px;font-size:9px;line-height:11px;color:#000;left:45.00px;transform:scaleX(0.841);transform-origin:0 0;">Note</span>
<span class="t" style="top:269px;font-size:9.5px;line-height:12px;color:#000;font-weight:bold;left:10.00px;transform:scaleX(0.884);transform-origin:0 0;">Codice</span>
<span class="t" style="top:269px;font-size:9.5px;line-height:12px;color:#000;font-weight:bold;left:77.00px;transform:scaleX(0.891);transform-origin:0 0;">Descrizione</span>
<span class="t" style="top:269px;font-size:9.5px;line-height:12px;color:#000;font-weight:bold;left:190.00px;transform:scaleX(0.919);transform-origin:0 0;">Reparto</span>
<span class="t" style="top:269px;font-size:9.5px;line-height:12px;color:#000;font-weight:bold;left:268.50px;transform:scaleX(0.903);transform-origin:0 0;">Superficie</span>
<span class="t" style="top:269px;font-size:9.5px;line-height:12px;color:#000;font-weight:bold;left:327.00px;transform:scaleX(0.911);transform-origin:0 0;">Unità di Mis.</span>
<span class="t" style="top:269px;font-size:9.5px;line-height:12px;color:#000;font-weight:bold;left:390.75px;transform:scaleX(0.895);transform-origin:0 0;">Min.Ril.</span>
<span class="t" style="top:269px;font-size:9.5px;line-height:12px;color:#000;font-weight:bold;left:433.00px;transform:scaleX(0.898);transform-origin:0 0;">Risultato</span>
<span class="t" style="top:269px;font-size:9.5px;line-height:12px;color:#000;font-weight:bold;left:481.00px;transform:scaleX(0.899);transform-origin:0 0;">Note</span>
<span class="t" style="top:281px;font-size:9px;line-height:11px;color:#202020;left:47.50px;transform:scaleX(0.806);transform-origin:0 0;">CBT</span>
<span class="t" style="top:281px;font-size:9px;line-height:11px;color:#202020;left:159.00px;transform:scaleX(0.837);transform-origin:0 0;">macelleria laboratorio</span>
<span class="t" style="top:281px;font-size:9px;line-height:11px;color:#202020;left:259.00px;transform:scaleX(0.856);transform-origin:0 0;">tavolo teflon 1</span>
<span class="t" style="top:281px;font-size:9px;line-height:11px;color:#202020;left:335.75px;transform:scaleX(0.888);transform-origin:0 0;">UFC/cm2</span>
<span class="t" style="top:281px;font-size:9px;line-height:11px;color:#202020;right:200.00px;transform:scaleX(0.899);transform-origin:100% 0;">50</span>
<span class="t" style="top:281px;font-size:9px;line-height:11px;color:#202020;right:152.25px;transform:scaleX(0.899);transform-origin:100% 0;">50</span>
<span class="t" style="top:293px;font-size:9px;line-height:11px;color:#202020;left:47.50px;transform:scaleX(0.806);transform-origin:0 0;">CBT</span>
<span class="t" style="top:293px;font-size:9px;line-height:11px;color:#202020;left:159.00px;transform:scaleX(0.837);transform-origin:0 0;">macelleria laboratorio</span>
<span class="t" style="top:293px;font-size:9px;line-height:11px;color:#202020;left:259.00px;transform:scaleX(0.856);transform-origin:0 0;">tavolo teflon 2</span>
<span class="t" style="top:293px;font-size:9px;line-height:11px;color:#202020;left:335.75px;transform:scaleX(0.888);transform-origin:0 0;">UFC/cm2</span>
<span class="t" style="top:293px;font-size:9px;line-height:11px;color:#202020;right:200.00px;transform:scaleX(0.899);transform-origin:100% 0;">50</span>
<span class="t" style="top:293px;font-size:9px;line-height:11px;color:#202020;right:152.25px;transform:scaleX(0.899);transform-origin:100% 0;">50</span>
<span class="t" style="top:304px;font-size:9px;line-height:11px;color:#202020;left:47.50px;transform:scaleX(0.806);transform-origin:0 0;">CBT</span>
<span class="t" style="top:304px;font-size:9px;line-height:11px;color:#202020;left:159.00px;transform:scaleX(0.837);transform-origin:0 0;">macelleria laboratorio</span>
<span class="t" style="top:304px;font-size:9px;line-height:11px;color:#202020;left:259.00px;transform:scaleX(0.856);transform-origin:0 0;">tavolo teflon 3</span>
<span class="t" style="top:304px;font-size:9px;line-height:11px;color:#202020;left:335.75px;transform:scaleX(0.888);transform-origin:0 0;">UFC/cm2</span>
<span class="t" style="top:304px;font-size:9px;line-height:11px;color:#202020;right:200.00px;transform:scaleX(0.899);transform-origin:100% 0;">50</span>
<span class="t" style="top:304px;font-size:9px;line-height:11px;color:#202020;right:152.25px;transform:scaleX(0.899);transform-origin:100% 0;">50</span>
<span class="t" style="top:316px;font-size:9px;line-height:11px;color:#202020;left:47.50px;transform:scaleX(0.806);transform-origin:0 0;">CBT</span>
<span class="t" style="top:316px;font-size:9px;line-height:11px;color:#202020;left:159.00px;transform:scaleX(0.837);transform-origin:0 0;">macelleria laboratorio</span>
<span class="t" style="top:316px;font-size:9px;line-height:11px;color:#202020;left:259.00px;transform:scaleX(0.856);transform-origin:0 0;">tavolo teflon 4</span>
<span class="t" style="top:316px;font-size:9px;line-height:11px;color:#202020;left:335.75px;transform:scaleX(0.888);transform-origin:0 0;">UFC/cm2</span>
<span class="t" style="top:316px;font-size:9px;line-height:11px;color:#202020;right:200.00px;transform:scaleX(0.899);transform-origin:100% 0;">50</span>
<span class="t" style="top:316px;font-size:9px;line-height:11px;color:#202020;right:152.25px;transform:scaleX(0.899);transform-origin:100% 0;">50</span>
<span class="t" style="top:328px;font-size:9px;line-height:11px;color:#202020;left:47.50px;transform:scaleX(0.806);transform-origin:0 0;">CBT</span>
<span class="t" style="top:328px;font-size:9px;line-height:11px;color:#202020;left:159.00px;transform:scaleX(0.837);transform-origin:0 0;">macelleria laboratorio</span>
<span class="t" style="top:328px;font-size:9px;line-height:11px;color:#202020;left:259.00px;transform:scaleX(0.846);transform-origin:0 0;">tavolo avicolo 1</span>
<span class="t" style="top:328px;font-size:9px;line-height:11px;color:#202020;left:335.75px;transform:scaleX(0.888);transform-origin:0 0;">UFC/cm2</span>
<span class="t" style="top:328px;font-size:9px;line-height:11px;color:#202020;right:200.00px;transform:scaleX(0.899);transform-origin:100% 0;">50</span>
<span class="t" style="top:328px;font-size:9px;line-height:11px;color:#202020;right:152.25px;transform:scaleX(0.899);transform-origin:100% 0;">50</span>
<span class="t" style="top:339px;font-size:9px;line-height:11px;color:#202020;left:47.50px;transform:scaleX(0.806);transform-origin:0 0;">CBT</span>
<span class="t" style="top:339px;font-size:9px;line-height:11px;color:#202020;left:159.00px;transform:scaleX(0.837);transform-origin:0 0;">macelleria laboratorio</span>
<span class="t" style="top:339px;font-size:9px;line-height:11px;color:#202020;left:259.00px;transform:scaleX(0.846);transform-origin:0 0;">tavolo avicolo 2</span>
<span class="t" style="top:339px;font-size:9px;line-height:11px;color:#202020;left:335.75px;transform:scaleX(0.888);transform-origin:0 0;">UFC/cm2</span>
<span class="t" style="top:339px;font-size:9px;line-height:11px;color:#202020;right:200.00px;transform:scaleX(0.899);transform-origin:100% 0;">50</span>
<span class="t" style="top:339px;font-size:9px;line-height:11px;color:#202020;right:152.25px;transform:scaleX(0.899);transform-origin:100% 0;">50</span>
<span class="t" style="top:351px;font-size:9px;line-height:11px;color:#202020;left:47.50px;transform:scaleX(0.806);transform-origin:0 0;">CBT</span>
<span class="t" style="top:351px;font-size:9px;line-height:11px;color:#202020;left:159.00px;transform:scaleX(0.837);transform-origin:0 0;">macelleria laboratorio</span>
<span class="t" style="top:351px;font-size:9px;line-height:11px;color:#202020;left:259.00px;transform:scaleX(0.816);transform-origin:0 0;">coltello 1</span>
<span class="t" style="top:351px;font-size:9px;line-height:11px;color:#202020;left:335.75px;transform:scaleX(0.888);transform-origin:0 0;">UFC/cm2</span>
<span class="t" style="top:351px;font-size:9px;line-height:11px;color:#202020;right:200.00px;transform:scaleX(0.899);transform-origin:100% 0;">50</span>
<span class="t" style="top:351px;font-size:9px;line-height:11px;color:#202020;right:152.25px;transform:scaleX(0.865);transform-origin:100% 0;">100</span>
<span class="t" style="top:363px;font-size:9px;line-height:11px;color:#202020;left:47.50px;transform:scaleX(0.806);transform-origin:0 0;">CBT</span>
<span class="t" style="top:363px;font-size:9px;line-height:11px;color:#202020;left:159.00px;transform:scaleX(0.837);transform-origin:0 0;">macelleria laboratorio</span>
<span class="t" style="top:363px;font-size:9px;line-height:11px;color:#202020;left:259.00px;transform:scaleX(0.816);transform-origin:0 0;">coltello 2</span>
<span class="t" style="top:363px;font-size:9px;line-height:11px;color:#202020;left:335.75px;transform:scaleX(0.888);transform-origin:0 0;">UFC/cm2</span>
<span class="t" style="top:363px;font-size:9px;line-height:11px;color:#202020;right:200.00px;transform:scaleX(0.899);transform-origin:100% 0;">50</span>
<span class="t" style="top:363px;font-size:9px;line-height:11px;color:#202020;right:152.25px;transform:scaleX(0.865);transform-origin:100% 0;">100</span>
<span class="t" style="top:374px;font-size:9px;line-height:11px;color:#202020;left:47.50px;transform:scaleX(0.806);transform-origin:0 0;">CBT</span>
<span class="t" style="top:374px;font-size:9px;line-height:11px;color:#202020;left:159.00px;transform:scaleX(0.837);transform-origin:0 0;">macelleria laboratorio</span>
<span class="t" style="top:374px;font-size:9px;line-height:11px;color:#202020;left:259.00px;transform:scaleX(0.816);transform-origin:0 0;">coltello 3</span>
<span class="t" style="top:374px;font-size:9px;line-height:11px;color:#202020;left:335.75px;transform:scaleX(0.888);transform-origin:0 0;">UFC/cm2</span>
<span class="t" style="top:374px;font-size:9px;line-height:11px;color:#202020;right:200.00px;transform:scaleX(0.899);transform-origin:100% 0;">50</span>
<span class="t" style="top:374px;font-size:9px;line-height:11px;color:#202020;right:152.25px;transform:scaleX(0.865);transform-origin:100% 0;">100</span>
</body></html>
